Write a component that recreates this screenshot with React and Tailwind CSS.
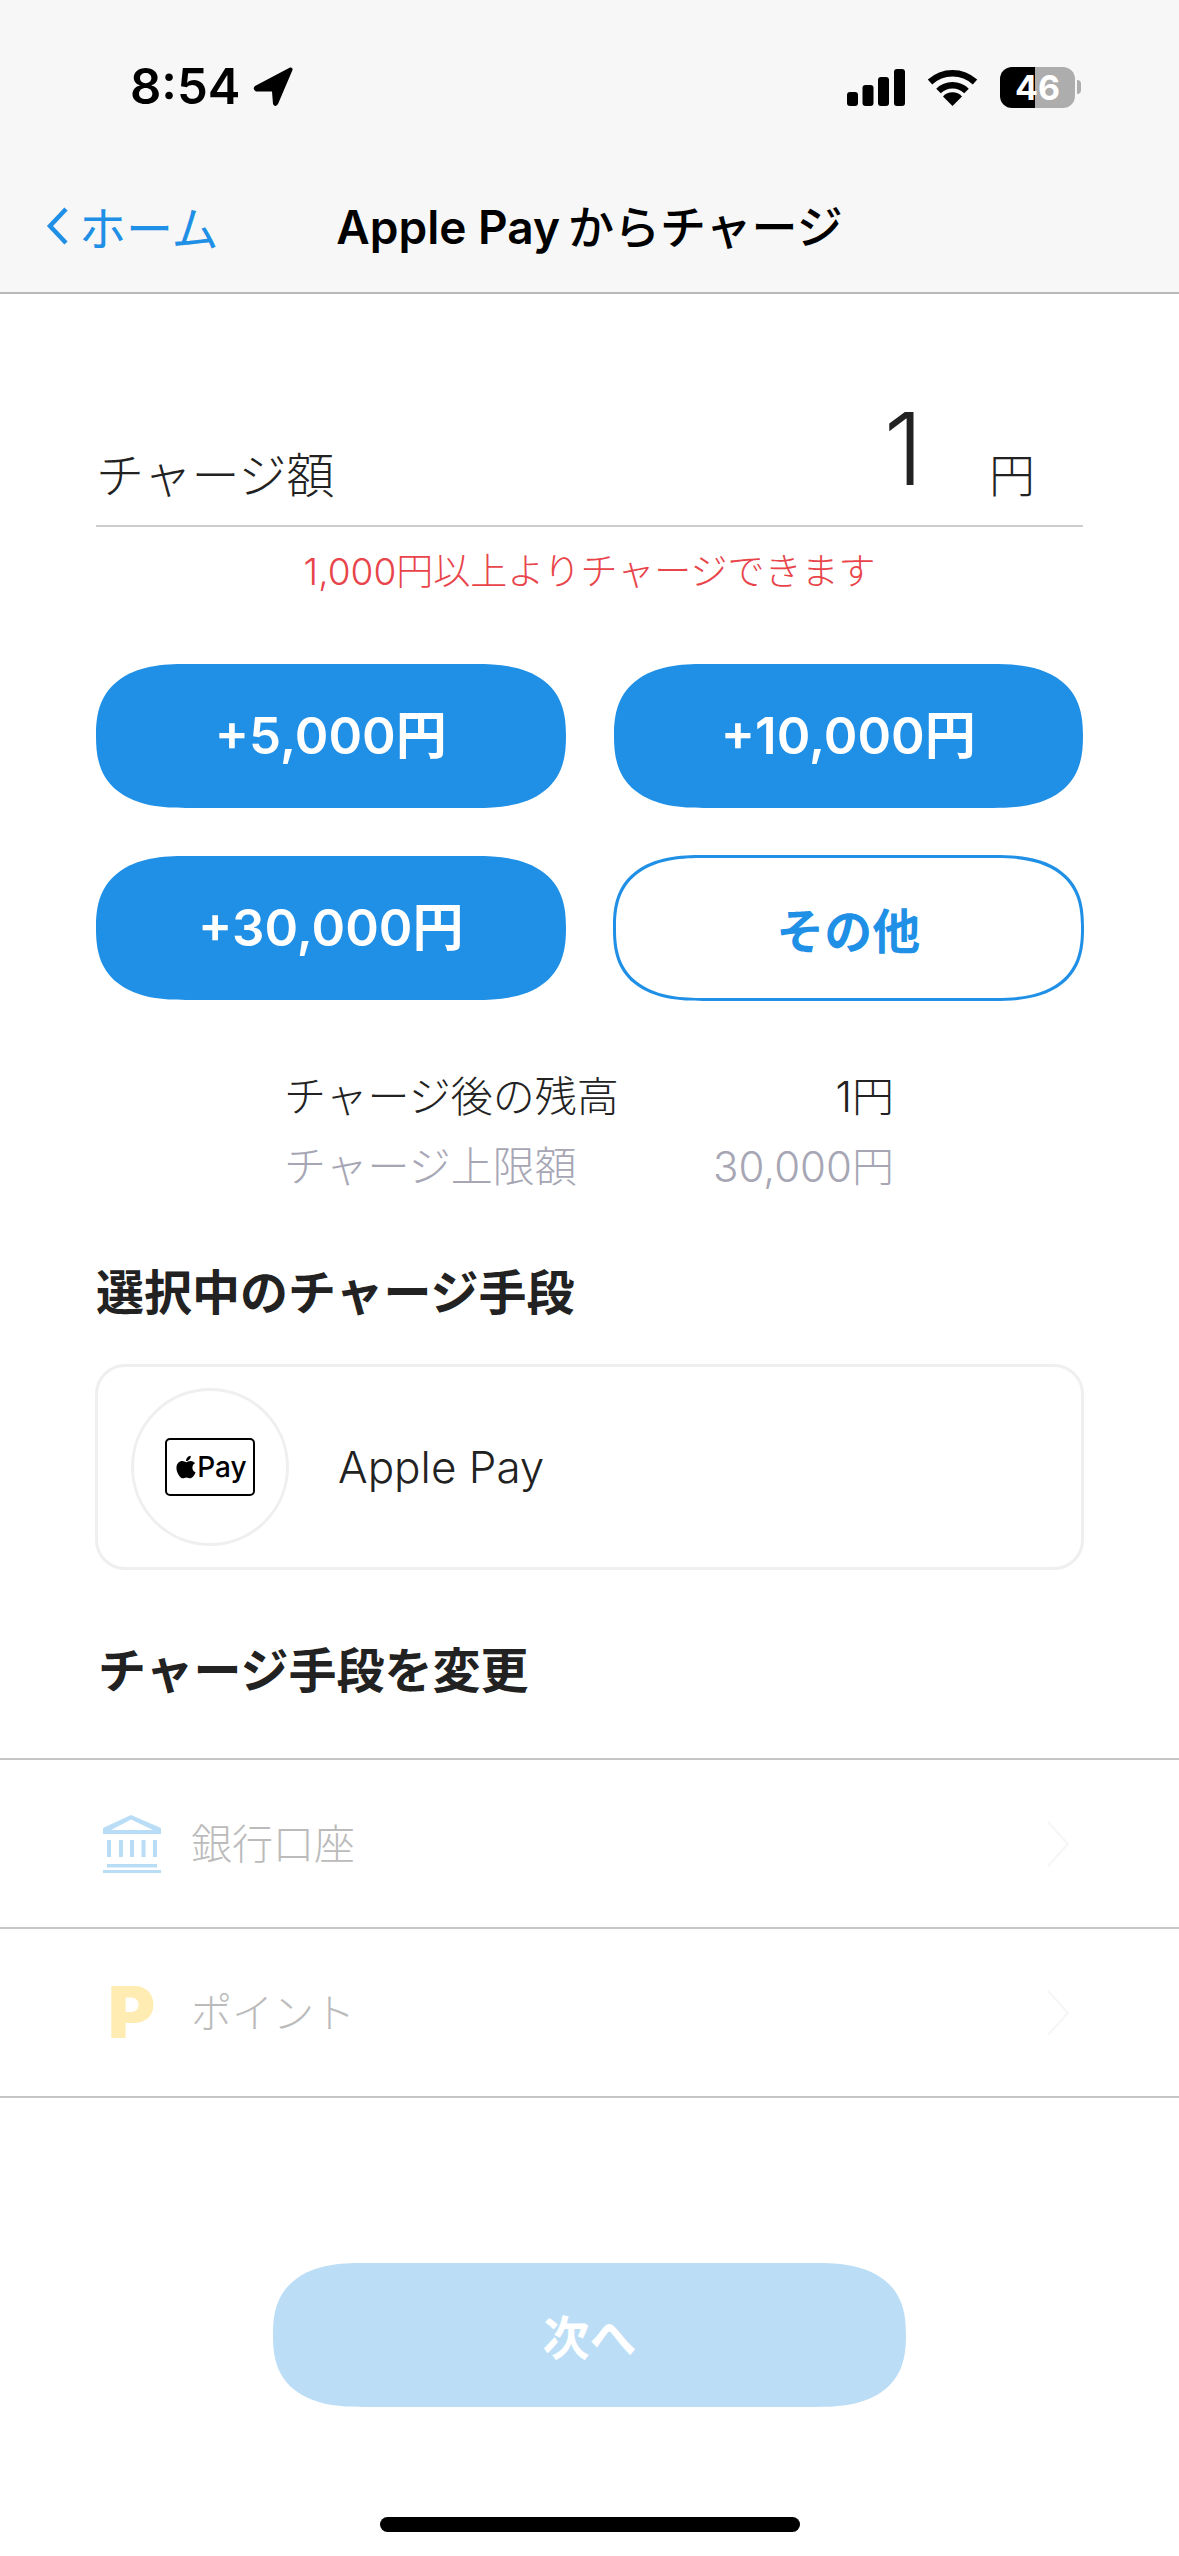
import { FaApple } from "react-icons/fa";

const Chevron = () => (
  <svg width="24" height="46" viewBox="0 0 24 46" fill="none" stroke="#f6f6f6" strokeWidth="2">
    <path d="M2 1 L22 23 L2 45" />
  </svg>
);

const AmountButton = ({ label }) => (
  <button className="h-[144px] rounded-[90px/72px] [corner-shape:superellipse(1.35)] bg-[#208fe6] text-white text-[51px] leading-[56px] font-semibold font-['Inter','Noto_Sans_CJK_JP',sans-serif]">
    {label}
  </button>
);

const StatusBar = () => (
  <div className="h-[112px] pt-[62px] pl-[130px] pr-[98px] flex items-start justify-between">
    <div className="flex items-center gap-[13px] h-[50px]">
      <span className="text-[49px] leading-[50px] font-semibold text-black font-['Inter',sans-serif]">8:54</span>
      <svg width="40" height="40" viewBox="0 0 40 40" fill="#000">
        <path d="M37 0.5 L2 19 Q-1 22 3 24.5 L19 24.5 L20 37 Q22 41 25 37 L39.5 3 Q40 0 37 0.5 Z" />
      </svg>
    </div>
    <div className="flex items-center h-[50px]">
      <svg width="58" height="37" viewBox="0 0 58 37" fill="#000">
        <rect x="0" y="23" width="11" height="14" rx="3" />
        <rect x="15.5" y="16" width="11" height="21" rx="3" />
        <rect x="31" y="8" width="11" height="29" rx="3" />
        <rect x="47" y="0" width="11" height="37" rx="3" />
      </svg>
      <svg className="ml-[22px]" width="51" height="37" viewBox="0 0 51 37" fill="none" stroke="#000" strokeWidth="6.5">
        <path d="M3 13 A 33 33 0 0 1 48 13" />
        <path d="M11.5 22 A 20 20 0 0 1 39.5 22" />
        <path d="M25.5 37 L16 27.5 A 13 13 0 0 1 35 27.5 Z" fill="#000" stroke="none" />
      </svg>
      <div className="ml-[22px] w-[75px] h-[41px] rounded-[12px] overflow-hidden flex items-center justify-center bg-[linear-gradient(90deg,#000_0,#000_35px,#adadad_35px,#adadad_100%)]">
        <span className="text-[34px] leading-[41px] font-bold text-white font-['Inter',sans-serif]">46</span>
      </div>
      <div className="ml-[2px] w-[4px] h-[14px] rounded-r-full bg-[#adadad]" />
    </div>
  </div>
);

const Header = () => (
  <header className="h-[294px] bg-[#f7f7f7] border-b-2 border-[#b9b9b9] shrink-0">
    <StatusBar />
    <div className="mt-[85px] grid grid-cols-[1fr_auto_1fr] items-center h-[54px]">
      <div className="flex items-center pl-[46px] gap-[11px] text-[#208fe6]">
        <svg width="22" height="38" viewBox="0 0 22 38" fill="none" stroke="#208fe6" strokeWidth="4.5">
          <path d="M20 2 L4 19 L20 36" />
        </svg>
        <span className="text-[47px] leading-[54px] font-['Noto_Sans_CJK_JP',sans-serif]">ホーム</span>
      </div>
      <h1 className="text-[46px] leading-[54px] font-semibold text-black whitespace-nowrap font-['Inter','Noto_Sans_CJK_JP',sans-serif]">
        Apple Pay<span className="ml-[8px] font-medium font-['Noto_Sans_CJK_JP',sans-serif]">からチャージ</span>
      </h1>
      <div />
    </div>
  </header>
);

const ChargeOption = ({ icon, label }) => (
  <div className="h-[169px] border-b-2 border-[#c6c6c6] flex items-center pr-[109px]">
    <div className="w-[88px] ml-[103px] shrink-0">{icon}</div>
    <span className="flex-1 mb-[5px] text-[41px] leading-[50px] text-[#bbbbbb] font-light">{label}</span>
    <Chevron />
  </div>
);

const BankIcon = (
  <svg width="58" height="58" viewBox="0 0 58 58" fill="#b9ddf6" className="shrink-0">
    <path d="M28 0 L58 13 L58 19 L0 19 L0 13 Z M28 4.5 L8 15 L50 15 Z" fillRule="evenodd" />
    <rect x="4" y="25" width="4" height="17" />
    <rect x="16" y="25" width="4" height="17" />
    <rect x="27" y="25" width="4" height="17" />
    <rect x="38.500" y="25" width="4" height="17" />
    <rect x="50" y="25" width="4" height="17" />
    <rect x="4" y="49" width="50" height="3.500" />
    <rect x="0" y="55" width="58" height="3" />
  </svg>
);

export default function App() {
  return (
    <div className="w-[1179px] h-[2556px] bg-white flex flex-col overflow-hidden font-['Noto_Sans_CJK_JP',sans-serif] text-[#222]">
      <Header />

      <main className="flex flex-col flex-1">
        <div className="mx-[96px] mt-[104px] h-[129px] border-b-2 border-[#cdcdcd] flex items-end pb-[23px] pr-[48px]">
          <span className="flex-1 text-[48px] leading-[60px] font-light">チャージ額</span>
          <span className="mb-[1px] mr-[-6px] text-[100px] leading-[104px] font-light font-['Inter',sans-serif]">1</span>
          <span className="ml-[72px] text-[46px] leading-[60px] font-light">円</span>
        </div>
        <p className="mt-[20px] text-center text-[37px] leading-[50px] text-[#e8444a] font-light font-['Inter','Noto_Sans_CJK_JP',sans-serif]">
          1,000円以上よりチャージできます
        </p>

        <div className="mx-[96px] mt-[67px] grid grid-cols-2 gap-x-[48px] gap-y-[48px]">
          <AmountButton label="+5,000円" />
          <AmountButton label="+10,000円" />
          <AmountButton label="+30,000円" />
          <button className="-m-[1px] h-[146px] rounded-[90px/72px] [corner-shape:superellipse(1.35)] border-[3px] border-[#208fe6] bg-white text-[#208fe6] text-[48px] leading-[56px] font-bold">
            その他
          </button>
        </div>

        <dl className="mt-[72px] ml-[284px] w-[610px] flex flex-col gap-[20px] text-[42px] leading-[50px] font-light font-['Inter','Noto_Sans_CJK_JP',sans-serif]">
          <div className="flex justify-between">
            <dt>チャージ後の残高</dt>
            <dd>1円</dd>
          </div>
          <div className="flex justify-between text-[#a6a6b4]">
            <dt>チャージ上限額</dt>
            <dd>30,000円</dd>
          </div>
        </dl>

        <h2 className="mt-[67px] ml-[96px] text-[48px] leading-[60px] font-bold">選択中のチャージ手段</h2>

        <div className="mt-[45px] mx-[95px] h-[206px] rounded-[30px] border-[3px] border-[#efefef] flex items-center pl-[33px]">
          <div className="w-[158px] h-[158px] rounded-full border-[3px] border-[#efefef] flex items-center justify-center shrink-0">
            <div className="w-[90px] h-[58px] rounded-[5px] border-2 border-black flex items-center justify-center">
              <FaApple className="text-[26px] text-black" />
              <span className="-ml-[2px] text-[28px] leading-[30px] font-medium text-black font-['Inter',sans-serif]">Pay</span>
            </div>
          </div>
          <span className="ml-[49px] text-[44px] leading-[56px] font-light font-['Inter',sans-serif]">Apple Pay</span>
        </div>

        <h2 className="mt-[67px] ml-[98px] text-[48px] leading-[60px] font-bold">チャージ手段を変更</h2>

        <div className="mt-[61px] border-t-2 border-[#c6c6c6]">
          <ChargeOption icon={BankIcon} label="銀行口座" />
          <ChargeOption
            icon={<span className="ml-[5px] text-[72px] leading-[60px] font-black text-[#ffecb3] font-['Inter',sans-serif]">P</span>}
            label="ポイント"
          />
        </div>

        <div className="mt-[165px] flex justify-center">
          <button className="w-[633px] h-[144px] rounded-[90px/72px] [corner-shape:superellipse(1.35)] bg-[#bbdef6] text-white text-[47px] leading-[56px] font-bold">
            次へ
          </button>
        </div>

        <div className="mt-auto mb-[24px] mx-auto w-[420px] h-[15px] rounded-full bg-black" />
      </main>
    </div>
  );
}
